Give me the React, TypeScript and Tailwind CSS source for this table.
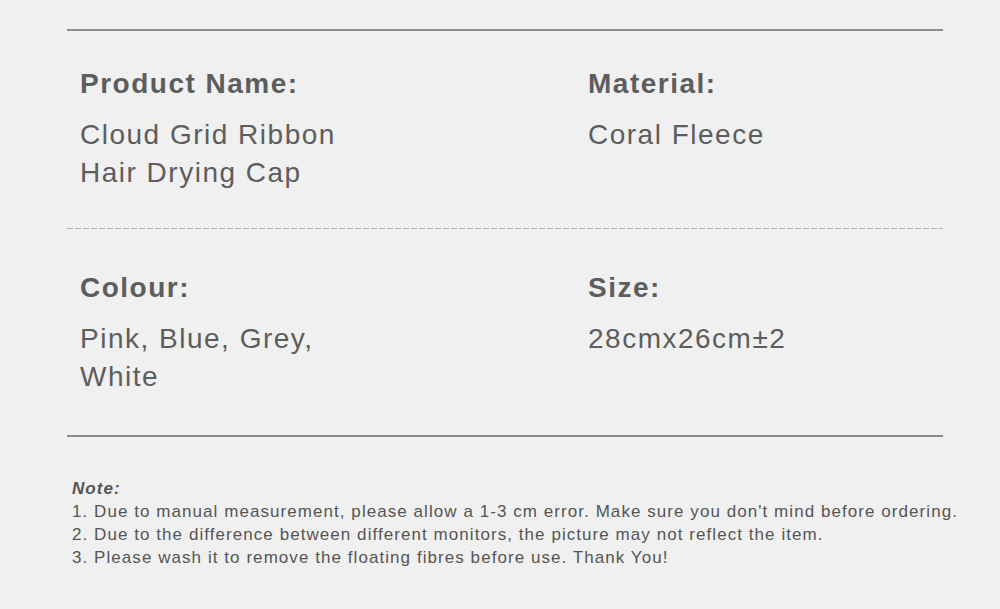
import React from 'react';

type Spec = { label: string; lines: string[] };

const SpecBlock = ({ label, lines }: Spec) => (
    <div>
        <div className="text-[28px] leading-[38px] font-bold tracking-[1.5px]">{label}</div>
        <div className="mt-[13px] text-[28px] leading-[38px] tracking-[1.5px]">
            {lines.map((line) => (
                <div key={line}>{line}</div>
            ))}
        </div>
    </div>
);

const notes = [
    "1. Due to manual measurement, please allow a 1-3 cm error. Make sure you don't mind before ordering.",
    '2. Due to the difference between different monitors, the picture may not reflect the item.',
    '3. Please wash it to remove the floating fibres before use. Thank You!',
];

export default function App() {
    return (
        <div className="w-[1000px] h-[609px] bg-[#f0f0f0] text-[#5d5d5d] font-['Liberation_Sans',Arial,sans-serif] overflow-hidden">
            <div className="ml-[67px] w-[876px] pt-[29px]">
                {/* Top rule */}
                <div className="h-[2px] bg-[#8c8c8c]" />

                {/* Name / material */}
                <div className="grid grid-cols-[508px_1fr] pl-[13px] pt-[34px] pb-[36px]">
                    <SpecBlock label="Product Name:" lines={['Cloud Grid Ribbon', 'Hair Drying Cap']} />
                    <SpecBlock label="Material:" lines={['Coral Fleece']} />
                </div>

                {/* Dashed divider */}
                <div className="h-px bg-[repeating-linear-gradient(to_right,#b4b4b4_0_6px,transparent_6px_8px)]" />

                {/* Colour / size */}
                <div className="grid grid-cols-[508px_1fr] pl-[13px] pt-[40px] pb-[39px]">
                    <SpecBlock label="Colour:" lines={['Pink, Blue, Grey,', 'White']} />
                    <SpecBlock label="Size:" lines={['28cmx26cm±2']} />
                </div>

                {/* Bottom rule */}
                <div className="h-[2px] bg-[#8c8c8c]" />
            </div>

            {/* Notes */}
            <div className="pl-[72px] pt-[40px] text-[17px] leading-[23px] tracking-[1.06px] text-[#555555]">
                <div className="font-bold italic">Note:</div>
                {notes.map((n) => (
                    <div key={n} className="whitespace-nowrap">{n}</div>
                ))}
            </div>
        </div>
    );
}
